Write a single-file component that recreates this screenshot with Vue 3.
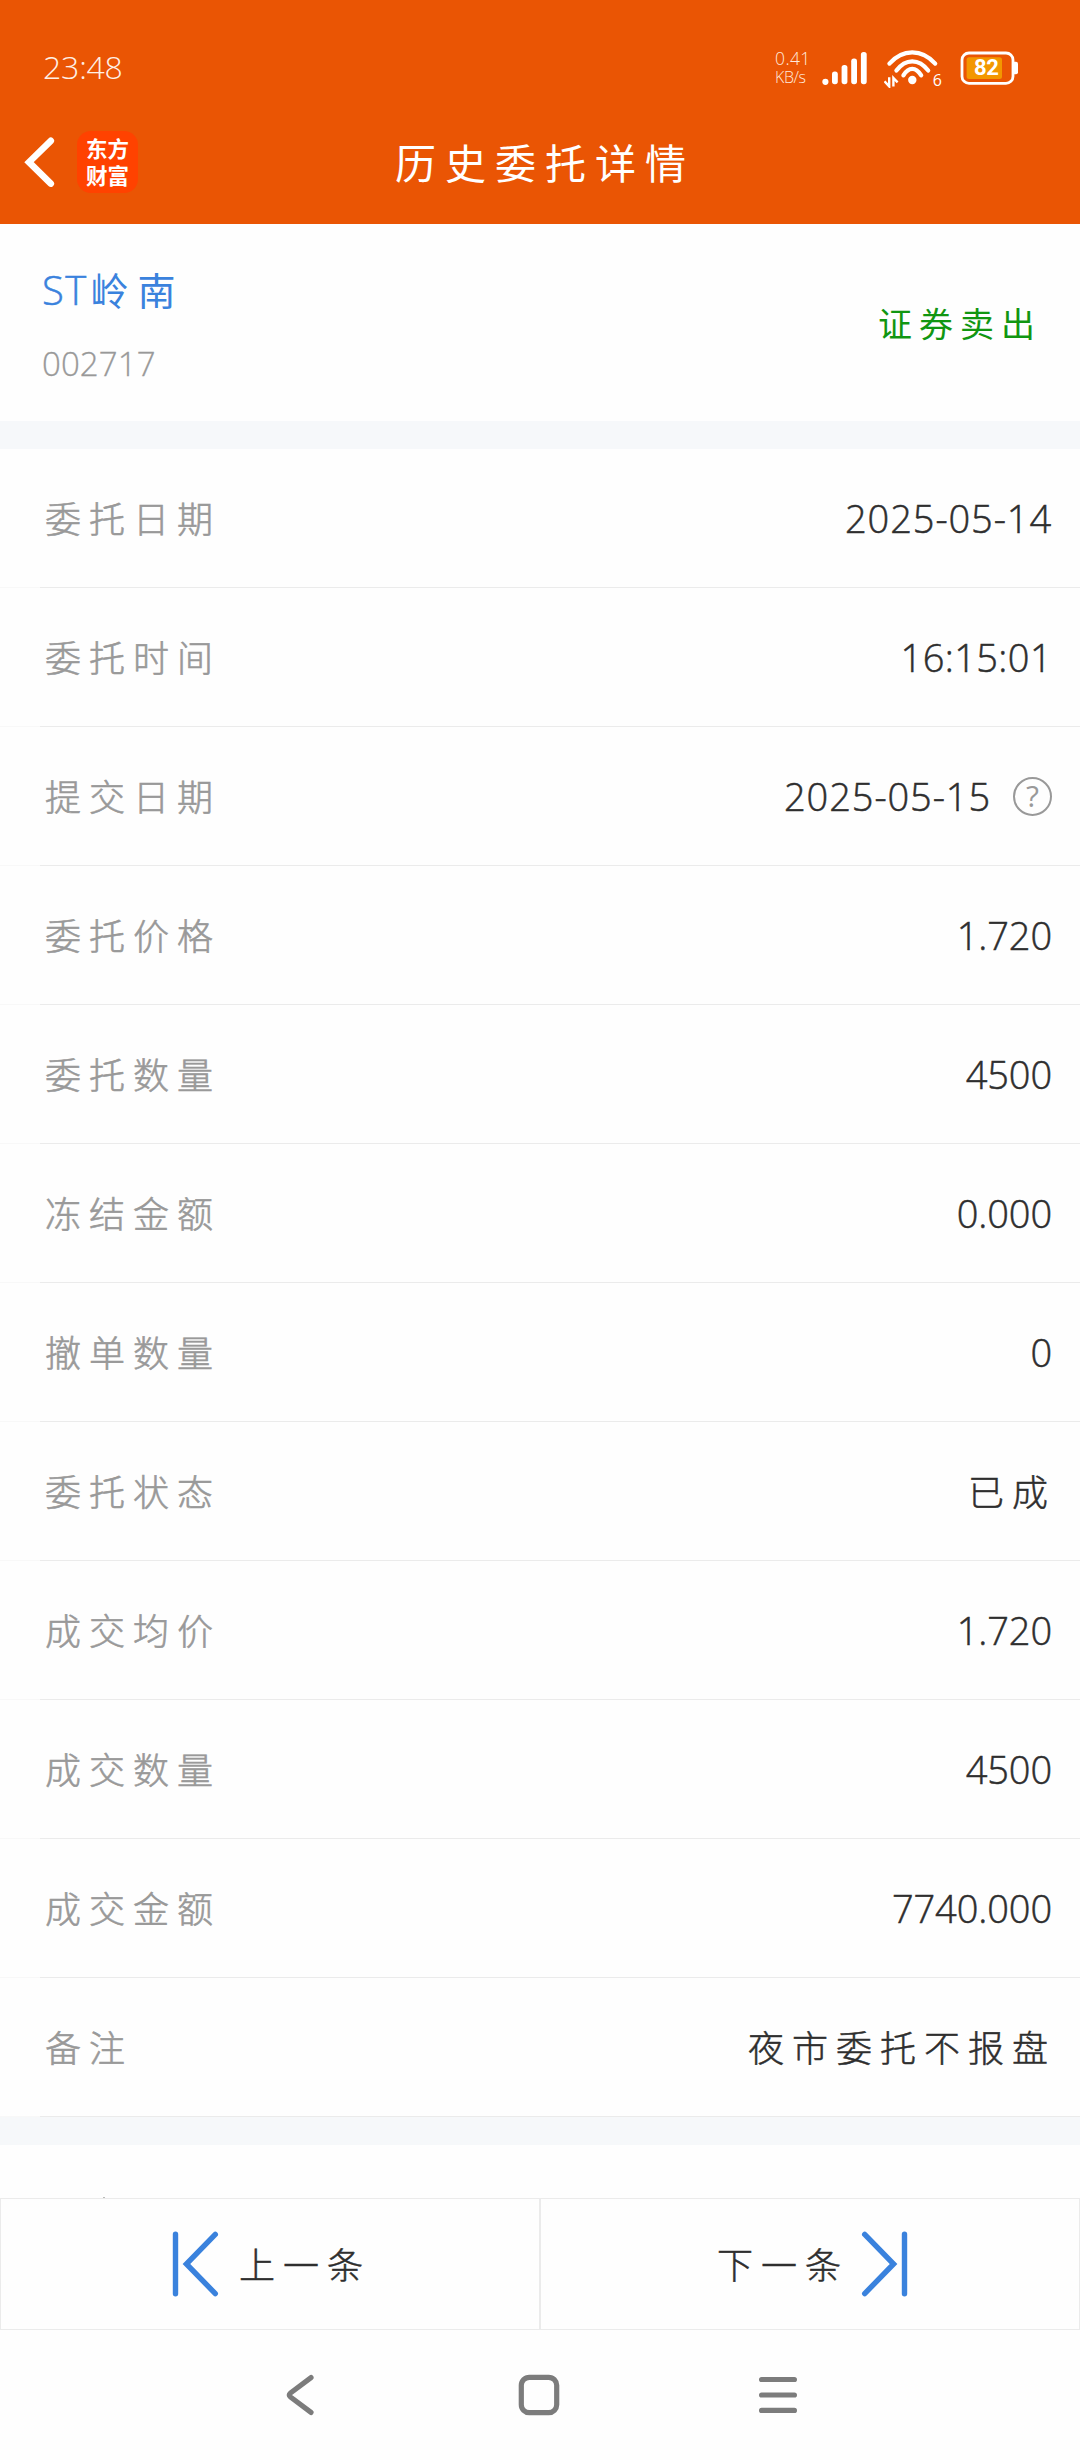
<script setup>
import { ref } from 'vue'

const stock = ref({ name: ['ST', '岭南'], code: '002717', side: '证券卖出' })

// type ajusta el espaciado del valor: date, time, cjk o número por defecto
const rows = ref([
  { label: '委托日期', value: '2025-05-14', type: 'date' },
  { label: '委托时间', value: '16:15:01', type: 'time' },
  { label: '提交日期', value: '2025-05-15', type: 'date', help: true },
  { label: '委托价格', value: '1.720' },
  { label: '委托数量', value: '4500' },
  { label: '冻结金额', value: '0.000' },
  { label: '撤单数量', value: '0' },
  { label: '委托状态', value: '已成', type: 'cjk' },
  { label: '成交均价', value: '1.720' },
  { label: '成交数量', value: '4500' },
  { label: '成交金额', value: '7740.000' },
  { label: '备注', value: '夜市委托不报盘', type: 'cjk' }
])
</script>

<template>
  <div class="screen">
    <header class="header">
      <div class="status-bar">
        <span class="clock">23:48</span>
        <div class="status-icons">
          <div class="net-speed">
            <span class="speed-num">0.41</span>
            <span class="speed-unit">KB/s</span>
          </div>
          <svg class="signal" width="47" height="36" viewBox="0 0 47 36" fill="#fff">
            <circle cx="3.4" cy="31.8" r="3.1" />
            <rect x="10" y="21.6" width="5.8" height="12.6" rx="2.6" />
            <rect x="19.6" y="15" width="5.8" height="19.2" rx="2.6" />
            <rect x="29.2" y="8.6" width="5.8" height="25.6" rx="2.6" />
            <rect x="38.9" y="2" width="5.8" height="32.2" rx="2.6" />
          </svg>
          <div class="wifi">
            <svg width="58" height="40" viewBox="0 0 58 40" fill="none" stroke="#fff" stroke-width="4.2" stroke-linecap="round">
              <path d="M5.4 15.6C18.5 0.5 38 0.5 51.2 15.6" />
              <path d="M12.4 22.6C21.5 10.2 35 10.2 44.2 22.6" />
              <path d="M19.4 27.4C24.5 18.6 32 18.6 37.2 27.4" />
              <circle cx="28.3" cy="32" r="4.2" fill="#fff" stroke="none" />
              <path d="M0.5 33.2L5.2 38.4V29.2M9.4 38.4V30L13.6 34.4" stroke-width="2.4" stroke-linecap="butt" />
            </svg>
            <span class="wifi-gen">6</span>
          </div>
          <div class="battery">
            <svg width="58" height="36" viewBox="0 0 58 36">
              <rect x="2" y="3" width="51" height="30.4" rx="7" fill="none" stroke="#fff" stroke-width="2.8" />
              <path d="M54 11.7h2a2 2 0 0 1 2 2v8.6a2 2 0 0 1-2 2h-2z" fill="#fff" />
              <rect x="6.6" y="7.3" width="35.4" height="21.6" rx="2.5" fill="#f39700" />
            </svg>
            <span class="battery-level">82</span>
          </div>
        </div>
      </div>

      <div class="nav">
        <div class="nav-side">
          <svg width="34" height="54" viewBox="0 0 34 54" fill="none" stroke="#fff" stroke-width="6.6" stroke-linecap="round" stroke-linejoin="miter">
            <path d="M28.8 5.8L7 27.2L28.8 48.6" />
          </svg>
          <div class="logo">
            <span>东方</span>
            <span>财富</span>
          </div>
        </div>
        <h1 class="title">历史委托详情</h1>
        <div class="nav-side"></div>
      </div>
    </header>

    <section class="stock">
      <div class="stock-info">
        <div class="stock-name"><span class="latin">{{ stock.name[0] }}</span><span>{{ stock.name[1] }}</span></div>
        <div class="stock-code">{{ stock.code }}</div>
      </div>
      <div class="stock-side">{{ stock.side }}</div>
    </section>

    <div class="band"></div>

    <ul class="detail-list">
      <li v-for="row in rows" :key="row.label" class="detail-row">
        <span class="label">{{ row.label }}</span>
        <span :class="['value', row.type ? `value-${row.type}` : '']">{{ row.value }}</span>
        <span v-if="row.help" class="help">?</span>
      </li>
    </ul>

    <div class="band"></div>

    <div class="next-section"><i class="speck"></i></div>

    <footer class="pager">
      <button class="pager-btn prev">
        <svg width="48" height="68" viewBox="0 0 48 68" fill="none" stroke="#3a82dd" stroke-width="5.4" stroke-linecap="round">
          <path d="M4.5 4.2V63.8M44.3 4.4L15.4 34L44.3 63.6" />
        </svg>
        <span>上一条</span>
      </button>
      <button class="pager-btn next">
        <span>下一条</span>
        <svg width="48" height="68" viewBox="0 0 48 68" fill="none" stroke="#3a82dd" stroke-width="5.4" stroke-linecap="round">
          <path d="M43.5 4.2V63.8M3.7 4.4L32.6 34L3.7 63.6" />
        </svg>
      </button>
    </footer>

    <div class="system-nav">
      <svg width="42" height="42" viewBox="0 0 42 42">
        <path d="M32 3.6L11.5 19Q9 21 11.5 23L32 38.4" />
      </svg>
      <svg width="42" height="42" viewBox="0 0 42 42">
        <rect x="3.3" y="3.3" width="35.4" height="35.4" rx="8" />
      </svg>
      <svg width="42" height="42" viewBox="0 0 42 42">
        <path d="M4.6 5.5H37.4M4.6 21H37.4M4.6 36.4H37.4" />
      </svg>
    </div>
  </div>
</template>

<style>
body {
  background: #fff;
}
</style>

<style scoped>
.screen {
  width: 1080px;
  height: 2460px;
  overflow: hidden;
  display: flex;
  flex-direction: column;
  background: #fefefe;
  color: #2e2e2e;
  font-family: "Open Sans", "Noto Sans CJK SC", sans-serif;
  font-weight: 300;
}

.header {
  height: 224px;
  background: #ea5504;
  color: #fff;
}

.status-bar {
  display: flex;
  justify-content: space-between;
  align-items: center;
  height: 52px;
  padding: 42px 62px 0 43px;
}

.clock {
  font-size: 32px;
  line-height: 40px;
  margin-top: -3px;
  letter-spacing: -0.2px;
  color: #fff0e6;
}

.status-icons {
  display: flex;
  align-items: center;
}

.net-speed {
  display: flex;
  flex-direction: column;
  width: 34px;
  margin-right: 13px;
  color: #ffe9dc;
}

.speed-num {
  font-size: 17.5px;
  line-height: 19px;
  letter-spacing: 0.4px;
}

.speed-unit {
  font-size: 16px;
  line-height: 19px;
  letter-spacing: -0.4px;
}

.signal {
  margin-right: 15px;
}

.wifi,
.battery {
  position: relative;
  display: flex;
}

.wifi {
  margin-right: 18px;
}

.wifi-gen {
  position: absolute;
  right: 0;
  bottom: -2px;
  font-size: 16px;
  line-height: 20px;
  font-weight: 400;
}

.battery-level {
  position: absolute;
  left: 14px;
  top: 5px;
  font-family: Roboto, sans-serif;
  font-size: 22px;
  line-height: 26px;
  font-weight: 700;
  letter-spacing: -0.4px;
}

.nav {
  display: flex;
  justify-content: space-between;
  align-items: center;
  height: 136px;
  padding: 0 22px;
}

.nav-side {
  display: flex;
  align-items: center;
  gap: 21px;
  width: 160px;
}

.logo {
  display: flex;
  flex-direction: column;
  align-items: center;
  justify-content: center;
  gap: 6px;
  box-sizing: border-box;
  width: 61px;
  height: 62px;
  padding-bottom: 3px;
  border-radius: 14px;
  background: #ff4200;
}

.logo span {
  font-family: "Noto Sans CJK SC", sans-serif;
  font-size: 21.5px;
  line-height: 21px;
  font-weight: 700;
}

.title {
  margin: 0;
  padding: 2px 0 0 10px;
  font-size: 41px;
  line-height: 60px;
  font-weight: 400;
  letter-spacing: 9px;
}

.stock {
  display: flex;
  justify-content: space-between;
  align-items: center;
  height: 197px;
  padding: 0 38px 0 42px;
}

.stock-info {
  padding-top: 6px;
}

.stock-name {
  font-size: 38px;
  line-height: 60px;
  letter-spacing: 9px;
  color: #3a82dd;
  font-weight: 400;
}

.stock-name .latin {
  font-size: 40px;
  letter-spacing: 1.4px;
  margin-right: 3px;
  font-weight: 300;
  -webkit-text-stroke: 0.5px #3a82dd;
}

.stock-code {
  margin-top: 16px;
  font-size: 33px;
  line-height: 56px;
  letter-spacing: 0.1px;
  color: #999;
  -webkit-text-stroke: 0.3px #999;
}

.stock-side {
  padding-top: 2px;
  font-size: 34px;
  line-height: 50px;
  letter-spacing: 7px;
  font-weight: 400;
  color: #119611;
}

.band {
  height: 28px;
  background: #f6f8fa;
}

.detail-list {
  margin: 0;
  padding: 0;
  list-style: none;
}

.detail-row {
  display: flex;
  align-items: center;
  height: 138px;
  padding: 0 28px 0 45px;
  border-bottom: 1px solid;
  border-image: linear-gradient(to right, #f8f8f8 41px, #ebebeb 41px) 1;
}

.label {
  margin-top: -2px;
  font-size: 36px;
  letter-spacing: 8px;
  color: #999;
  -webkit-text-stroke: 0.6px #999;
}

.value {
  margin-left: auto;
  font-size: 38px;
  letter-spacing: -0.1px;
  -webkit-text-stroke: 0.5px #2e2e2e;
}

.value-date {
  letter-spacing: 0.9px;
}

.value-time {
  letter-spacing: 0.4px;
}

.value-cjk {
  margin: -2px -4px 0 auto;
  font-size: 36px;
  letter-spacing: 8px;
}

.help {
  display: flex;
  align-items: center;
  justify-content: center;
  box-sizing: border-box;
  width: 39px;
  height: 39px;
  margin-left: 22px;
  border: 2px solid #999;
  border-radius: 50%;
  font-size: 30px;
  line-height: 30px;
  font-weight: 400;
  color: #999;
}

.next-section {
  display: flex;
  align-items: flex-end;
  height: 53px;
  padding-left: 103px;
}

.speck {
  width: 2px;
  height: 1px;
  background: #bbb;
}

.pager {
  display: flex;
  height: 132px;
}

.pager-btn {
  display: flex;
  align-items: center;
  box-sizing: border-box;
  width: 540px;
  padding: 0;
  border: 1px solid #ebebeb;
  background: transparent;
  color: #2e2e2e;
  font-family: inherit;
  font-size: 36px;
  font-weight: 300;
  letter-spacing: 8px;
}

.pager-btn span {
  margin-top: -2px;
  -webkit-text-stroke: 0.5px #2e2e2e;
}

.prev {
  padding-left: 170px;
  gap: 20px;
}

.next {
  padding-left: 176px;
  gap: 12px;
}

.system-nav {
  display: flex;
  align-items: center;
  justify-content: center;
  gap: 197px;
  height: 130px;
  padding-right: 2px;
}

.system-nav svg {
  fill: none;
  stroke: #7c7c7c;
  stroke-width: 5.2;
  stroke-linecap: round;
}
</style>
